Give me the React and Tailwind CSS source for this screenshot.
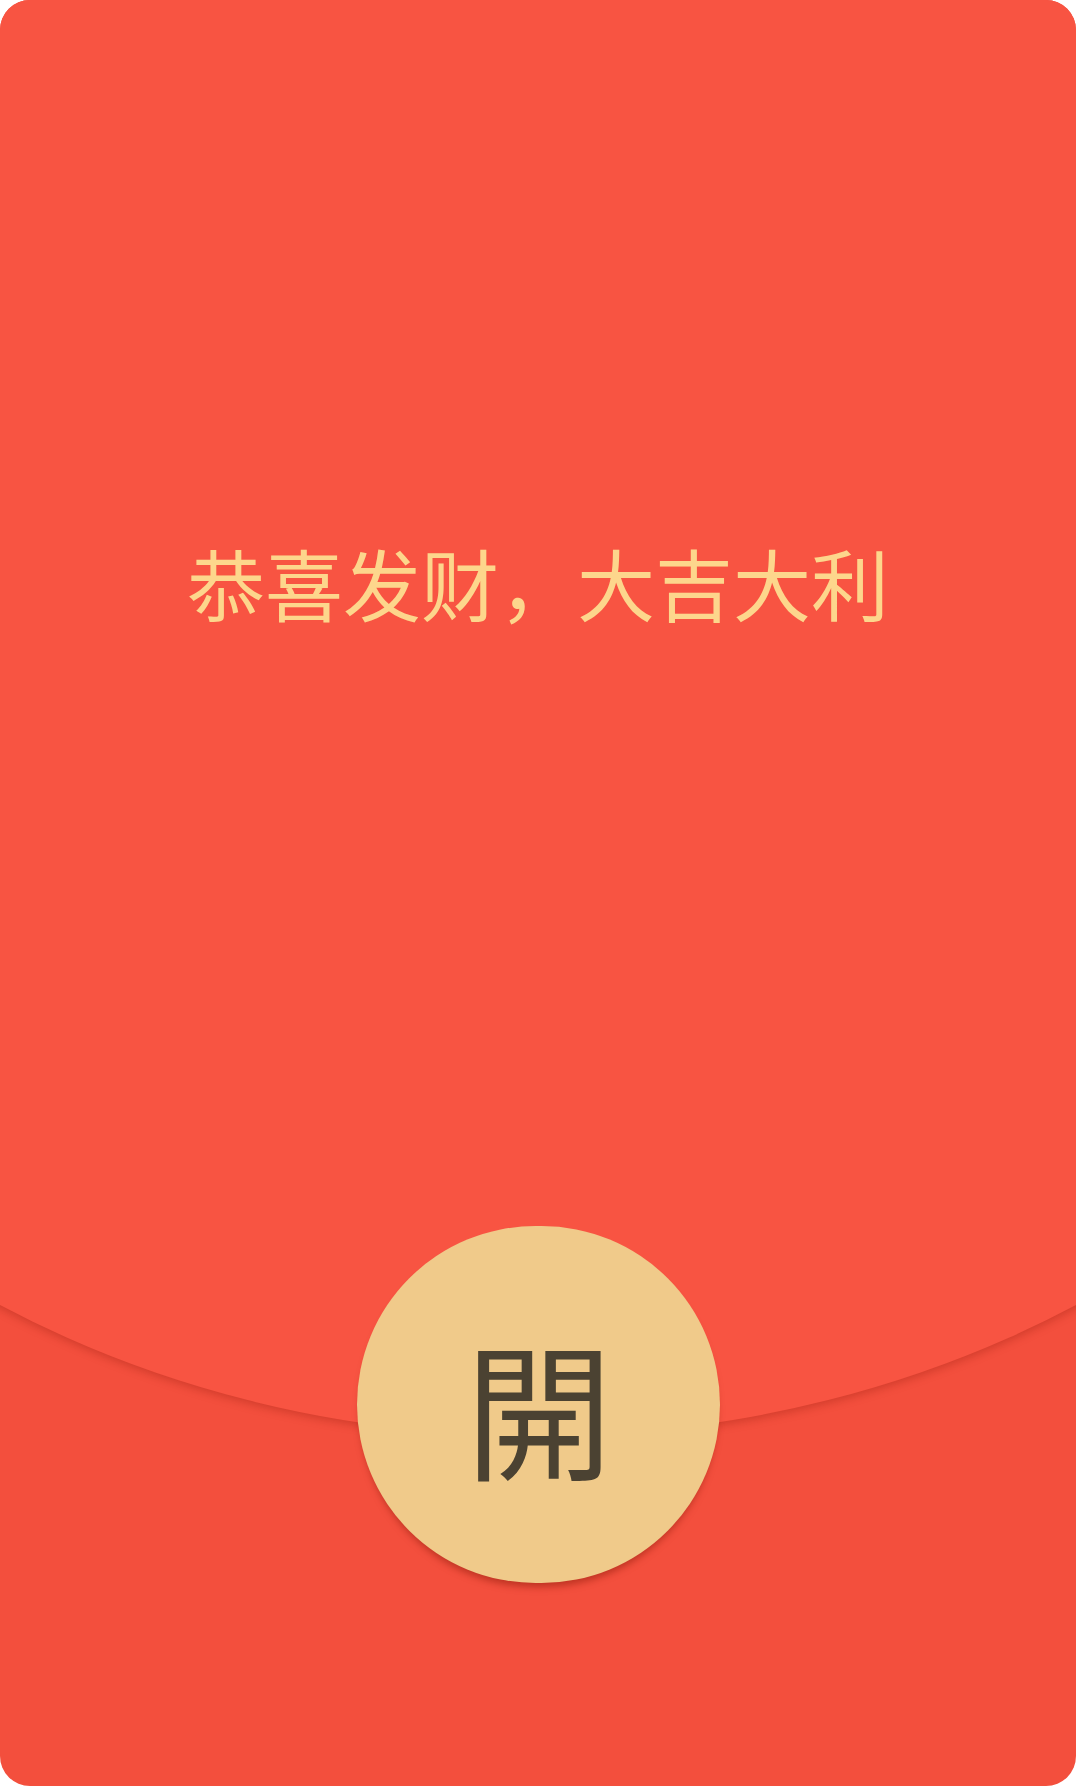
export default function App() {
  return (
    <div className="w-[1076px] h-[1786px] bg-white">
      <div className="h-full rounded-[30px] overflow-hidden bg-[#f34f3d] flex flex-col items-center">
        <div className="w-[2000px] h-[1436px] shrink-0 bg-[#f85442] rounded-b-[50%_834px] shadow-[0_3px_9px_rgba(150,30,15,0.35)] text-center pt-[543px]">
          <div
            className="text-[78px] leading-none text-[#fdd68c]"
            style={{ fontFamily: '"Noto Sans CJK SC", "Noto Sans", sans-serif' }}
          >
            恭喜发财，大吉大利
          </div>
        </div>
        <div
          className="-mt-[210px] relative z-10 w-[363px] h-[357px] shrink-0 rounded-full bg-[#f0ca8a] shadow-[0_7px_7px_-3px_rgba(140,25,10,0.5)] flex items-center justify-center text-[148px] leading-none text-[#4b4232]"
          style={{ fontFamily: '"Noto Sans CJK SC", "Noto Sans", sans-serif' }}
        >
          <span className="pl-[2px]">開</span>
        </div>
      </div>
    </div>
  );
}
